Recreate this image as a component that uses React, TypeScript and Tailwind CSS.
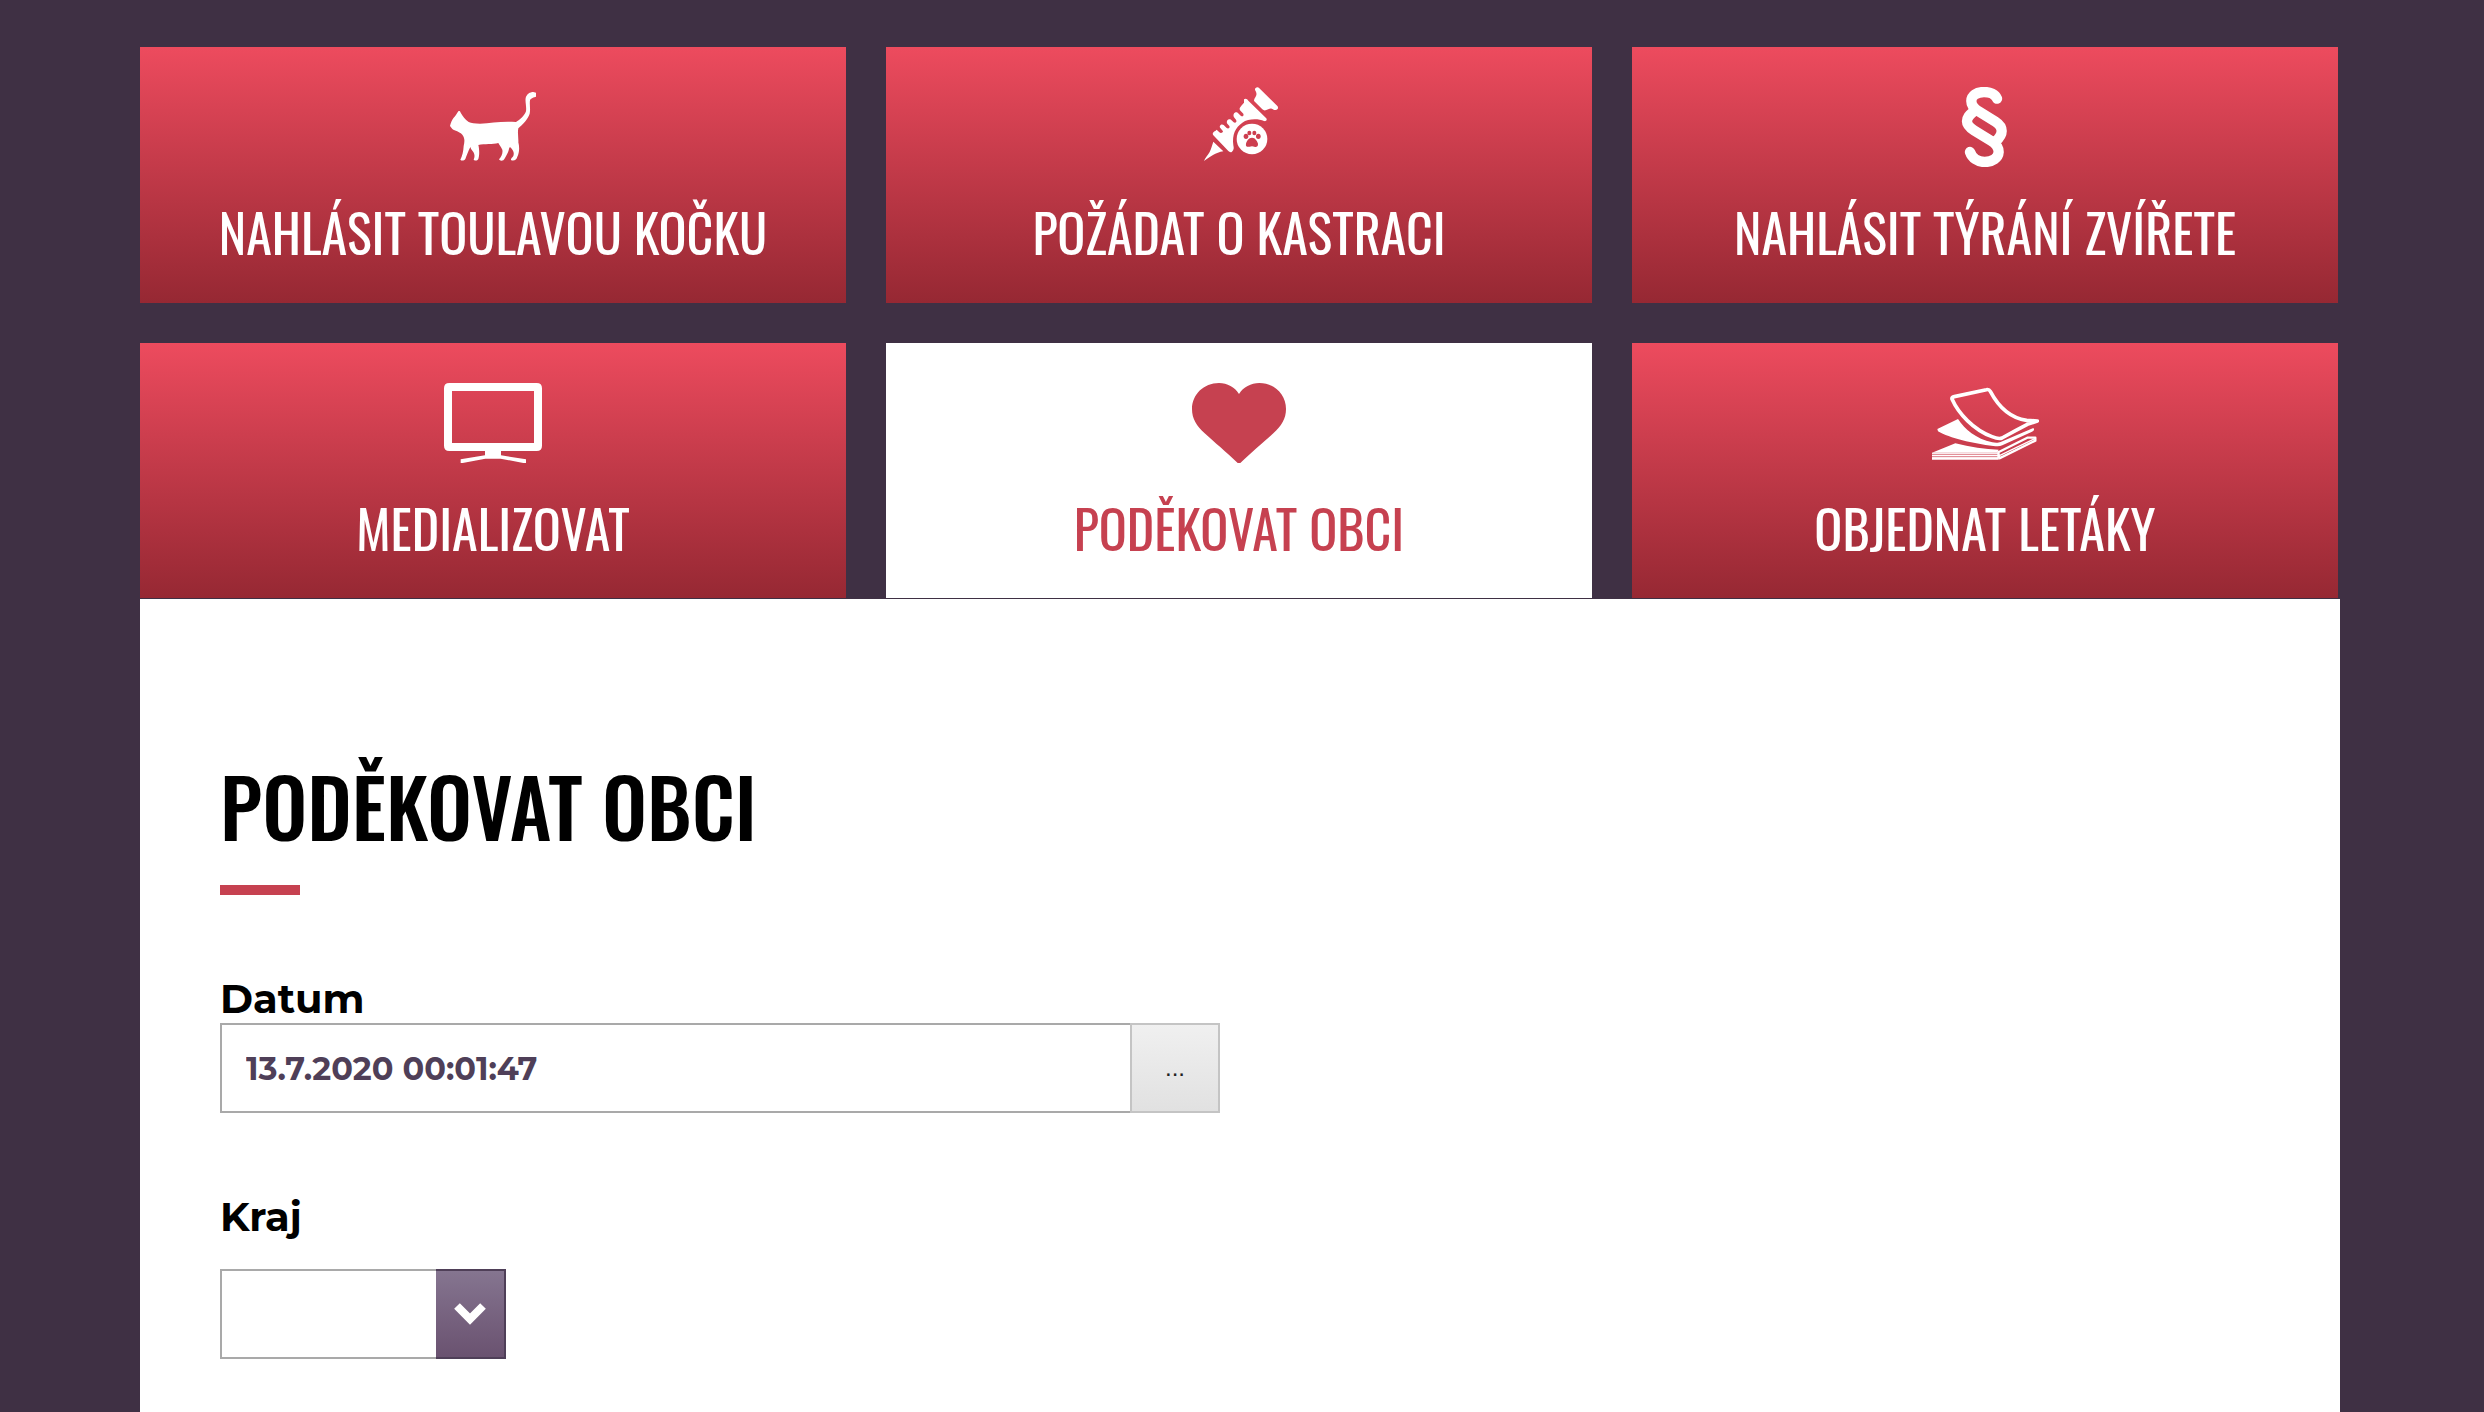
import type { ReactNode } from "react";

function CatIcon() {
  return (
    <svg className="h-20 w-24" viewBox="45 51 288 240" fill="currentColor" aria-hidden="true">
      <path d="M60 168 C62 158 66 150 71 143 C77 138 81 130 85 124 C88 122 91 124 92 128 C98 138 105 149 116 156 C124 160 134 161 150 161 C185 159 215 153 258 156 C270 149 283 138 288 124 C290 110 285 94 287 84 C290 72 300 66 310 66 L318 68 L318 80 C312 82 302 84 300 91 C298 104 302 116 299 131 C294 148 278 163 265 175 C262 190 266 205 265 217 C269 232 268 248 262 260 C259 269 255 273 244 271 C240 267 247 263 250 258 C253 249 251 241 240 231 C236 235 237 241 234 247 C229 257 224 267 220 271 C214 273 209 272 207 268 C215 259 219 250 217 239 C213 231 208 225 205 219 C188 224 164 221 145 225 C148 236 149 255 145 267 C141 273 136 273 131 269 C135 261 134 252 130 246 C126 241 123 238 121 231 C115 243 110 257 106 267 C102 273 94 273 91 269 C97 259 100 244 101 228 C104 214 105 204 97 194 C88 184 75 183 67 177 Z" />
    </svg>
  );
}

function SyringeIcon() {
  return (
    <svg className="h-20 w-24" viewBox="33 51 288 240" fill="currentColor" aria-hidden="true">
      <path d="M225 60 C224 53 233 49 238 55 L292 108 C297 114 292 121 286 120 C281 120 278 117 275 116 C268 115 263 119 257 121 C253 122 250 121 247 118 L223 94 C220 90 225 84 228 78 C231 72 229 66 225 60 Z" />
      <path d="M192 88 C197 84 202 87 205 92 L258 144 C263 149 259 155 252 153 C236 146 205 145 187 158 C166 172 156 194 160 226 C162 234 162 240 156 245 C152 248 148 246 145 243 L100 196 C96 190 100 185 106 183 L110 179 L118 187 C123 191 128 188 129 184 L121 174 C116 168 124 160 131 165 L140 174 C145 178 151 173 148 168 L142 161 C137 153 145 144 153 149 L161 157 C167 160 172 155 168 149 L162 142 C157 131 166 123 173 128 L183 138 C189 141 192 136 190 131 L180 121 C177 115 180 112 184 107 L192 98 Z" />
      <path d="M100 215 L130 244 C119 246 108 250 99 255 C89 260 80 268 72 273 C75 264 84 255 89 246 C94 235 96 226 100 215 Z" />
      <circle cx="216" cy="207" r="46" />
      <g className="fill-[#cd3e4f]">
        <ellipse cx="198" cy="199" rx="7" ry="8" />
        <ellipse cx="208" cy="189" rx="6" ry="7" />
        <ellipse cx="223" cy="189" rx="6" ry="7" />
        <ellipse cx="235" cy="199" rx="7" ry="8" />
        <path d="M216 203 C226 203 232 214 234 221 C235 230 228 232 223 230 C219 228 213 228 209 230 C202 232 196 229 198 221 C200 213 206 203 216 203 Z" />
      </g>
    </svg>
  );
}

function ParagraphIcon() {
  return (
    <svg
      className="h-20 w-12"
      viewBox="93 51 144 240"
      fill="none"
      stroke="currentColor"
      strokeWidth="31"
      strokeLinecap="round"
      aria-hidden="true"
    >
      <path d="M201 86 C196 73 180 66 162 66 C140 66 124 77 124 93 C124 108 132 115 144 123 L196 155 C210 164 215 172 215 183 C215 196 207 205 197 214" />
      <path d="M120 246 C126 264 144 276 164 276 C187 276 205 264 206 246 C206 231 198 222 184 213 L132 181 C118 172 111 165 111 154 C111 142 118 135 130 125" />
    </svg>
  );
}

function ScreenIcon() {
  return (
    <svg className="h-20 w-[98px]" viewBox="42 39 294 240" fill="currentColor" aria-hidden="true">
      <path
        fillRule="evenodd"
        d="M58 39 H320 Q336 39 336 55 V227 Q336 243 320 243 H58 Q42 243 42 227 V55 Q42 39 58 39 Z M66 63 V219 H312 V63 Z"
      />
      <path d="M165 240 H213 V256 L288 268 V279 H280 L212 266 H166 L98 279 H92 V268 L165 256 Z" />
    </svg>
  );
}

function HeartIcon() {
  return (
    <svg className="h-20 w-24" viewBox="63 39 288 240" fill="currentColor" aria-hidden="true">
      <path d="M207 72 C194 51 172 39 147 39 C101 39 66 74 66 117 C66 147 80 167 104 190 C132 216 170 247 203 279 H211 C244 247 282 216 310 190 C334 167 348 147 348 117 C348 74 314 39 268 39 C243 39 220 51 207 72 Z" />
    </svg>
  );
}

function LeafletsIcon() {
  return (
    <svg className="h-20 w-[108px]" viewBox="63 39 324 240" fill="currentColor" aria-hidden="true">
      <path
        d="M126 87 C125 83 128 81 133 80 L229 59 Q237 57 241 64 C259 98 293 143 350 151 L382 153 L352 163 C325 177 301 190 276 204 C267 208 256 204 246 200 C190 179 145 130 126 87 Z"
        fill="none"
        stroke="currentColor"
        strokeWidth="11"
        strokeLinejoin="round"
      />
      <path d="M82 177 L144 147 C164 177 198 207 247 217 C255 219 266 219 272 216 L370 174 C374 178 372 182 366 185 L277 226 C269 230 260 229 250 228 C190 221 118 204 84 184 Z" />
      <path d="M66 248 L136 220 C180 232 225 237 266 239 L262 248 Z" />
      <path d="M66 248 H266 V269 H66 Z" />
      <path
        d="M265 247 L352 203 H376 V212 L268 265 Z"
        fill="none"
        stroke="currentColor"
        strokeWidth="7"
        strokeLinejoin="round"
      />
      <path d="M66 253 H262 M66 260 H262" className="stroke-[#dd7a85]" strokeWidth="3" />
      <path d="M270 256 L374 206" stroke="currentColor" strokeWidth="4" />
    </svg>
  );
}

type Card = { label: string; icon: ReactNode; active?: boolean };

const cards: Card[] = [
  { label: "Nahlásit toulavou kočku", icon: <CatIcon /> },
  { label: "Požádat o kastraci", icon: <SyringeIcon /> },
  { label: "Nahlásit týrání zvířete", icon: <ParagraphIcon /> },
  { label: "Medializovat", icon: <ScreenIcon /> },
  { label: "Poděkovat obci", icon: <HeartIcon />, active: true },
  { label: "Objednat letáky", icon: <LeafletsIcon /> },
];

export default function App() {
  return (
    <div className="min-h-screen bg-[#3f3044] pt-[47px] pr-36 pl-35 font-['Montserrat','Open_Sans',sans-serif] text-black flex flex-col">
      {/* Action tiles */}
      <nav className="grid grid-cols-3 gap-10 pr-0.5">
        {cards.map((card) => (
          <a
            key={card.label}
            href="#"
            className={`flex h-64 flex-col items-center pt-10 font-['Oswald','Roboto_Condensed',sans-serif] text-[52px] leading-[60px] uppercase ${
              card.active
                ? "bg-white text-[#c64150]"
                : "bg-linear-to-b from-[#ed4b5e] to-[#962833] text-white"
            }`}
          >
            {card.icon}
            <span className="mt-[35px]">{card.label}</span>
          </a>
        ))}
      </nav>

      {/* Form panel */}
      <main className="relative -mt-px flex-1 border-t border-[#3f3044] bg-white px-20 pt-[146px]">
        <h1 className="font-['Oswald','Roboto_Condensed',sans-serif] text-[80px] leading-[120px] font-medium uppercase">
          Poděkovat obci
        </h1>
        <div className="mt-5 h-2.5 w-20 bg-[#c64150]"></div>

        <form>
          <div className="mt-20">
            <label htmlFor="datum" className="block text-[40px] leading-[48px] font-bold">
              Datum
            </label>
            <div className="flex">
              <input
                id="datum"
                type="text"
                defaultValue="13.7.2020 00:01:47"
                className="h-[90px] w-[910px] border-2 border-r-0 border-[#a9a9a9] px-6 text-[32px] font-bold text-[#4f3f58] outline-none"
              />
              <button
                type="button"
                aria-label="Vybrat datum"
                className="h-[90px] w-[90px] border-2 border-[#c4c4c4] bg-linear-to-b from-[#f0f0f0] to-[#e1e1e1] font-['Liberation_Sans',sans-serif] text-[24px] text-[#222222]"
              >
                ...
              </button>
            </div>
          </div>

          <div className="mt-20">
            <label htmlFor="kraj" className="block text-[40px] leading-[48px] font-bold">
              Kraj
            </label>
            <div className="relative mt-7 w-[286px]">
              <select
                id="kraj"
                className="block h-[90px] w-full appearance-none border-2 border-[#a9a9a9] bg-white pr-[70px] pl-6 text-[32px] font-bold text-[#4f3f58] outline-none"
              >
                <option></option>
              </select>
              <span className="pointer-events-none absolute inset-y-0 right-0 flex w-[70px] items-center justify-center border-y-2 border-r-2 border-[#4f3f58] bg-linear-to-b from-[#857590] to-[#6a5270] text-white">
                <svg className="h-6 w-8" viewBox="0 0 32 24" fill="none" stroke="currentColor" strokeWidth="8" aria-hidden="true">
                  <path d="M3 4 L16 17 L29 4" />
                </svg>
              </span>
            </div>
          </div>
        </form>
      </main>
    </div>
  );
}
